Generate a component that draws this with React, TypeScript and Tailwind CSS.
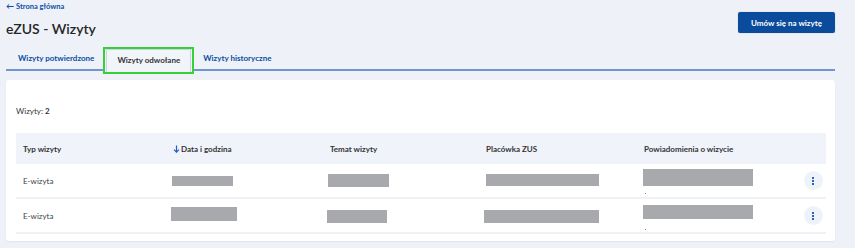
import React from "react";

const rows = [
  {
    type: "E-wizyta",
    date: "mt-[1px] ml-[-1px] h-[10px] w-[61px]",
    topic: "mt-[0px] ml-[-2px] h-[13px] w-[61px]",
    place: "mt-[-1px] h-[12px] w-[113px]",
    notify: "mb-[6px] ml-[-1px] h-[17px] w-[110px]",
  },
  {
    type: "E-wizyta",
    date: "mb-[3px] ml-[-2px] h-[14px] w-[66px]",
    topic: "mt-[1px] ml-[-3px] h-[13px] w-[60px]",
    place: "mt-[1px] ml-[-2px] h-[13px] w-[115px]",
    notify: "mb-[7px] ml-[-1px] h-[14px] w-[110px]",
  },
];

const cols =
  "grid grid-cols-[150px_157px_156px_158px_156px_26px] pl-[7px]";

function Kebab() {
  return (
    <div className="flex h-[19px] w-[19px] flex-col items-center justify-center gap-[1px] rounded-full bg-[#eef3fa]">
      <span className="h-[2px] w-[2px] bg-[#2c63b5]" />
      <span className="h-[2px] w-[2px] bg-[#2c63b5]" />
      <span className="h-[2px] w-[2px] bg-[#2c63b5]" />
    </div>
  );
}

export default function App() {
  return (
    <div className="h-[248px] w-[855px] overflow-hidden bg-[#eef2f8] pl-[6px] pr-[20px] font-['Lato',sans-serif] text-[#2b2b2b]">
      <div className="flex justify-between">
        <div>
          <a className="mt-[2px] flex items-center gap-[2px] text-[7.5px] font-bold leading-[9px] text-[#0b4ea2]">
            <span className="text-[8px]">←</span>
            Strona główna
          </a>
          <h1 className="mt-[9px] text-[14px] font-semibold leading-[18px] text-[#262626]">
            eZUS - Wizyty
          </h1>
        </div>
        <button className="mt-[12px] h-[21px] w-[97px] rounded-[2px] bg-[#0b4b9c] text-[8px] font-bold text-white shadow-[0_0_0_1px_#e4e9f1]">
          Umów się na wizytę
        </button>
      </div>

      <div className="mt-[9px] flex h-[24px] items-end border-b-[2px] border-[#6f97cd] text-[8px] font-bold">
        <div className="flex h-[22px] items-center pl-[12px] pr-[9px] text-[#0b4ea2]">
          Wizyty potwierdzone
        </div>
        <div className="mb-[-5px] flex h-[27px] items-center border-[2px] border-[#36d136] bg-[#f1f4f9] px-[1px]">
          <div className="flex h-full items-center border-x border-t border-[#c9d5e6] px-[10px] pb-[3px] text-[#333]">
            Wizyty odwołane
          </div>
        </div>
        <div className="flex h-[22px] items-center pl-[9px] text-[#0b4ea2]">
          Wizyty historyczne
        </div>
      </div>

      <div className="mt-[9px] h-[161px] rounded-[3px] bg-white pl-[10px] pr-[9px] pt-[26px] shadow-[0_1px_2px_rgba(0,0,0,0.06)]">
        <p className="text-[8px] leading-[10px] text-[#333]">
          Wizyty: <span className="font-bold">2</span>
        </p>
        <div className="mt-[17px] text-[8px]">
          <div className={`${cols} h-[31px] items-center bg-[#f0f4fa] font-bold text-[#333]`}>
            <div>Typ wizyty</div>
            <div className="flex items-center gap-[1px]">
              <svg width="7" height="8" viewBox="0 0 7 8" fill="none" stroke="#1f5fc0" strokeWidth="1.2">
                <path d="M3.5 0.5V7M1 4.6L3.5 7.2L6 4.6" />
              </svg>
              Data i godzina
            </div>
            <div>Temat wizyty</div>
            <div>Placówka ZUS</div>
            <div>Powiadomienia o wizycie</div>
            <div />
          </div>
          {rows.map((r, i) => (
            <div
              key={i}
              className={`${cols} h-[35px] items-center border-b-[2px] border-[#eef2f7] text-[#444]`}
            >
              <div>{r.type}</div>
              <div className="flex items-center">
                <div className={`bg-[#a8a9ad] ${r.date}`} />
              </div>
              <div className="flex items-center">
                <div className={`bg-[#a8a9ad] ${r.topic}`} />
              </div>
              <div className="flex items-center">
                <div className={`bg-[#a8a9ad] ${r.place}`} />
              </div>
              <div className="relative flex items-center">
                <div className={`bg-[#a8a9ad] ${r.notify}`} />
                <span className="absolute left-[1px] top-[24px] h-[1px] w-[1px] bg-[#888]" />
              </div>
              <div className="flex justify-center">
                <Kebab />
              </div>
            </div>
          ))}
        </div>
      </div>
    </div>
  );
}
